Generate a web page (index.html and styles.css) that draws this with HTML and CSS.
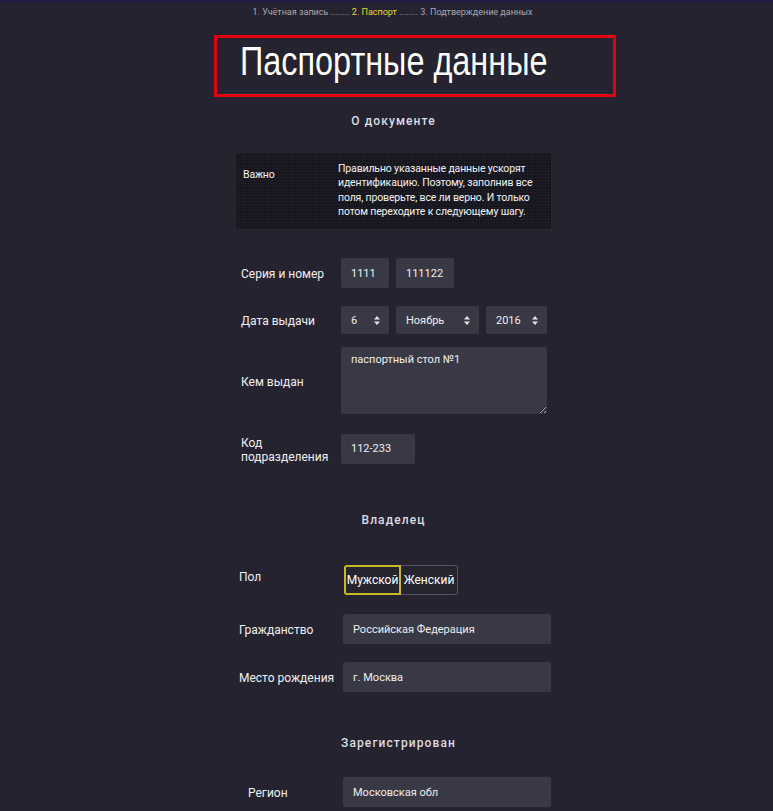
FILE: index.html
```html
<!DOCTYPE html>
<html lang="ru">
<head>
    <meta charset="UTF-8">
    <meta name="viewport" content="width=device-width, initial-scale=1.0">
    <title>Паспортные данные</title>
    <link rel="stylesheet" href="styles.css">
</head>
<body>
    <div class="topline"></div>

    <nav class="steps">
        1. Учётная запись ........ <span class="current">2. Паспорт</span> ........ 3. Подтверждение данных
    </nav>

    <header class="title-box">
        <h1>Паспортные данные</h1>
    </header>

    <main class="form">
        <h2 class="section-title">О документе</h2>

        <div class="notice">
            <div class="notice-label">Важно</div>
            <div class="notice-text">Правильно указанные данные ускорят идентификацию. Поэтому, заполнив все поля, проверьте, все ли верно. И только потом переходите к следующему шагу.</div>
        </div>

        <div class="row row-series">
            <label>Серия и номер</label>
            <div class="fields">
                <input class="input w-series" type="text" value="1111">
                <input class="input w-number" type="text" value="111122">
            </div>
        </div>

        <div class="row row-date">
            <label>Дата выдачи</label>
            <div class="fields">
                <div class="select w-day">
                    <span>6</span>
                    <svg width="6" height="9" viewBox="0 0 6 9"><path d="M3 0L6 3.5H0z M3 9L0 5.5H6z" fill="#e6e6e6"/></svg>
                </div>
                <div class="select w-month">
                    <span>Ноябрь</span>
                    <svg width="6" height="9" viewBox="0 0 6 9"><path d="M3 0L6 3.5H0z M3 9L0 5.5H6z" fill="#e6e6e6"/></svg>
                </div>
                <div class="select w-year">
                    <span>2016</span>
                    <svg width="6" height="9" viewBox="0 0 6 9"><path d="M3 0L6 3.5H0z M3 9L0 5.5H6z" fill="#e6e6e6"/></svg>
                </div>
            </div>
        </div>

        <div class="row row-issuer">
            <label>Кем выдан</label>
            <textarea class="input textarea">паспортный стол №1</textarea>
        </div>

        <div class="row row-code">
            <label>Код<br>подразделения</label>
            <div class="fields">
                <input class="input w-code" type="text" value="112-233">
            </div>
        </div>

        <h2 class="section-title owner-title">Владелец</h2>

        <div class="row row-gender">
            <label>Пол</label>
            <div class="toggle">
                <button class="active">Мужской</button>
                <button>Женский</button>
            </div>
        </div>

        <div class="row row-citizen">
            <label>Гражданство</label>
            <input class="input wide" type="text" value="Российская Федерация">
        </div>

        <div class="row row-birth">
            <label>Место рождения</label>
            <input class="input wide" type="text" value="г. Москва">
        </div>

        <h2 class="section-title reg-title">Зарегистрирован</h2>

        <div class="row row-region">
            <label>Регион</label>
            <input class="input wide" type="text" value="Московская обл">
        </div>
    </main>
</body>
</html>
```

FILE: styles.css
```css
body {
    margin: 0;
    padding: 0;
    background-color: #24232f;
    color: #e6e6e6;
    font-family: Roboto, "Noto Sans", sans-serif;
}

.topline {
    height: 2px;
    background-color: #1f1c4c;
}

.steps {
    text-align: center;
    font-size: 9px;
    color: #a9a8b0;
    padding: 3px 0 0 12px;
    height: 15px;
    line-height: 15px;
}

.steps .current {
    color: #eed530;
}

.title-box {
    width: 396px;
    height: 56px;
    margin: 15px 0 0 214px;
    border: 3px solid #e3000f;
}

.title-box h1 {
    margin: 0;
    padding-left: 23px;
    font-family: "Liberation Sans", sans-serif;
    font-weight: normal;
    font-size: 40px;
    line-height: 46px;
    color: #fff;
    transform: scaleX(0.81);
    transform-origin: 23px 0;
    white-space: nowrap;
}

.form {
    width: 315px;
    margin-left: 236px;
}

.section-title {
    margin: 16px 0 0;
    text-align: center;
    font-size: 12px;
    font-weight: 500;
    letter-spacing: 1.1px;
    line-height: 16px;
    color: #dcdce2;
}

.notice {
    display: grid;
    grid-template-columns: 95px 1fr;
    margin-top: 24px;
    padding: 9px 7px 10px;
    background-color: #16151e;
    background-image:
        repeating-linear-gradient(0deg, rgba(255, 255, 255, 0.025) 0 1px, transparent 1px 3px),
        repeating-linear-gradient(90deg, rgba(255, 255, 255, 0.025) 0 1px, transparent 1px 3px);
    font-size: 10.5px;
    letter-spacing: -0.15px;
    line-height: 14.3px;
    color: #f2f2f2;
}

.notice-label {
    padding-top: 6px;
}

.notice-text {
    padding-right: 4px;
}

.row {
    display: grid;
    grid-template-columns: 105px 1fr;
    align-items: center;
}

.row label {
    padding-left: 5px;
    padding-top: 4px;
    font-size: 12px;
    line-height: 13.5px;
    color: #f0f0f0;
}

.fields {
    display: flex;
    gap: 7px;
}

.input {
    box-sizing: border-box;
    height: 30px;
    padding: 0 10px;
    border: none;
    border-radius: 2px;
    background-color: #393845;
    color: #eeeeee;
    font-family: inherit;
    font-size: 11px;
    outline: none;
}

.w-series { width: 48px; }
.w-number { width: 58px; }
.w-code { width: 74px; }
.wide { width: 208px; margin-left: 2px; }

.select {
    box-sizing: border-box;
    height: 28px;
    padding: 0 9px 0 10px;
    display: flex;
    align-items: center;
    justify-content: space-between;
    border-radius: 2px;
    background-color: #393845;
    font-size: 11px;
    color: #eeeeee;
}

.w-day { width: 48px; }
.w-month { width: 83px; }
.w-year { width: 61px; }

.textarea {
    width: 206px;
    height: 67px;
    padding-top: 6px;
    resize: vertical;
    line-height: 14px;
}

.row-series { margin-top: 29px; }
.row-date { margin-top: 18px; }
.row-issuer { margin-top: 13px; }
.row-code { margin-top: 19px; }

.owner-title { margin-top: 48px; }

.row-gender { margin-top: 37px; }
.row-gender label { padding-left: 3px; padding-top: 0; margin-top: -5px; }
.row-citizen { margin-top: 19px; }
.row-birth { margin-top: 18px; }
.row-citizen label, .row-birth label { padding-left: 3px; }

.reg-title { margin-top: 43px; padding-left: 10px; }

.row-region { margin-top: 26px; }
.row-region label { padding-left: 12px; }

.toggle {
    display: flex;
    margin-left: 3px;
}

.toggle button {
    box-sizing: border-box;
    height: 30px;
    width: 57px;
    padding: 0;
    border: 1px solid #55545e;
    border-left: none;
    border-radius: 0 3px 3px 0;
    background-color: #25242f;
    color: #ffffff;
    font-family: inherit;
    font-size: 12px;
}

.toggle button.active {
    border: 2px solid #c9b724;
    border-radius: 3px 0 0 3px;
}
```
